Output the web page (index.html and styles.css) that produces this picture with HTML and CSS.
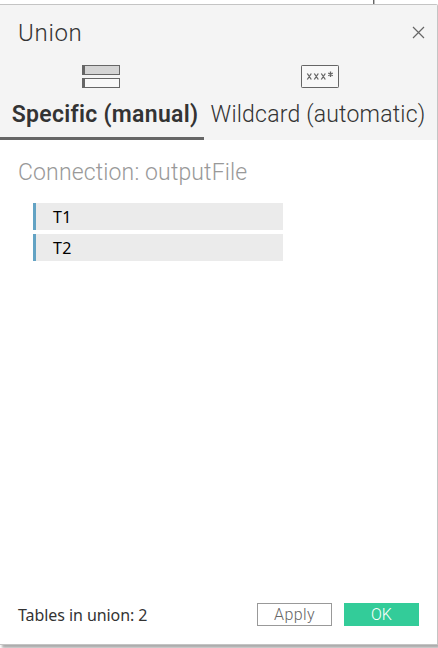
FILE: index.html
```
<!DOCTYPE html>
<html lang="en">
<head>
<meta charset="utf-8">
<title>Union</title>
<link rel="stylesheet" href="styles.css">
</head>
<body>
<div class="connector"></div>
<section class="dialog">
  <header class="head">
    <div class="title-row">
      <h1 class="title">Union</h1>
      <svg class="close" width="13" height="13" viewBox="0 0 13 13"><path d="M1 1L12 12M12 1L1 12" fill="none" stroke="#666" stroke-width="1.2"/></svg>
    </div>
    <nav class="tabs">
      <div class="tab active">
        <svg width="38" height="23" viewBox="0 0 38 23" shape-rendering="crispEdges">
          <path d="M.5 .5h37v9H.5z" fill="#d4d4d4" stroke="#666"/>
          <path d="M.5 13.5h37v9H.5z" fill="#f8f8f8" stroke="#666"/>
          <path d="M0 0h3v10H0zM0 13h3v10H0z" fill="#666"/>
        </svg>
        <span class="label specific">Specific (manual)</span>
      </div>
      <div class="tab wild">
        <svg width="38" height="23" viewBox="0 0 38 23">
          <rect x=".5" y=".5" width="37" height="22" rx=".7" fill="#f8f8f8" stroke="#666"/>
          <path d="M6.300 8.500l4 6M10.300 8.500l-4 6M13.300 8.500l4 6M17.300 8.500l-4 6M20.300 8.500l4 6M24.300 8.500l-4 6M29.500 6.500v5.500M27.200 8l4.600 2.600M31.800 8l-4.600 2.600" fill="none" stroke="#666" stroke-width="1.300"/>
        </svg>
        <span class="label wildcard">Wildcard (automatic)</span>
      </div>
    </nav>
  </header>
  <main class="body">
    <h2 class="connection">Connection: outputFile</h2>
    <ul class="tables">
      <li>T1</li>
      <li>T2</li>
    </ul>
  </main>
  <footer class="foot">
    <span class="count">Tables in union: 2</span>
    <button class="btn apply">Apply</button>
    <button class="btn ok">OK</button>
  </footer>
</section>
</body>
</html>
```
FILE: styles.css
```
* { box-sizing: border-box; }
body {
  margin: 0;
  height: 648px;
  overflow: hidden;
  background: #fff;
  font-family: Roboto, "Liberation Sans", sans-serif;
  color: #333;
}
.connector {
  width: 2px;
  height: 4px;
  margin-left: 373px;
  background: linear-gradient(90deg, #666 50%, #bbb 50%);
}
.dialog {
  display: flex;
  flex-direction: column;
  width: 438px;
  height: 641px;
  border: solid #c4c4c4;
  border-width: 1px 1px 1px 0;
  border-top-right-radius: 2px;
  background: #fff;
  box-shadow: 2px 3px 3px #aaa;
}
.head { height: 135px; background: #f4f4f4; }
.title-row {
  display: flex;
  justify-content: space-between;
  height: 60px;
  padding: 13px 12px 0 18px;
}
.title {
  margin: 0;
  font-size: 24px;
  line-height: 30px;
  font-weight: 300;
  letter-spacing: .7px;
}
.close { margin-top: 8px; }
.tabs { display: flex; height: 75px; }
.tab {
  display: flex;
  flex-direction: column;
  align-items: center;
  width: 204px;
}
.tab.wild { width: 233px; }
.tab.active { border-bottom: 3px solid #666; }
.tab svg { flex: none; }
.active svg { margin-right: 2px; }
.wild svg { margin-right: 1px; }
.label {
  margin-top: 12px;
  line-height: 30px;
  font-size: 23px;
  white-space: nowrap;
}
.specific { font-weight: 600; margin-left: 6px; letter-spacing: .3px; }
.wildcard { font-weight: 300; margin-right: 5px; letter-spacing: .2px; }
.body { flex: 1; padding: 18px 18px 0; }
.connection {
  margin: 0;
  font-size: 23px;
  line-height: 30px;
  font-weight: 300;
  letter-spacing: .14px;
  color: #999;
}
.tables {
  display: grid;
  gap: 4px;
  width: 250px;
  margin: 15px 0 0 15px;
  padding: 0;
  list-style: none;
}
.tables li {
  height: 27px;
  padding-left: 17px;
  border-left: 3px solid #63a3c4;
  background: #ebebeb;
  color: #000;
  font: 16px/28px "Noto Sans", sans-serif;
  letter-spacing: .4px;
}
.foot {
  display: flex;
  height: 41px;
  padding: 0 18px;
}
.count {
  flex: 1;
  font: 16px/24px "Noto Sans", sans-serif;
  letter-spacing: -.07px;
}
.btn {
  width: 75px;
  height: 23px;
  padding: 0;
  border: 1px solid #999;
  background: #fff;
  color: #666;
  font: 300 16px/21px Roboto, sans-serif;
  letter-spacing: .4px;
}
.ok {
  margin-left: 12px;
  border-color: #33cc99;
  background: #33cc99;
  color: #fff;
  letter-spacing: 0;
}
```
